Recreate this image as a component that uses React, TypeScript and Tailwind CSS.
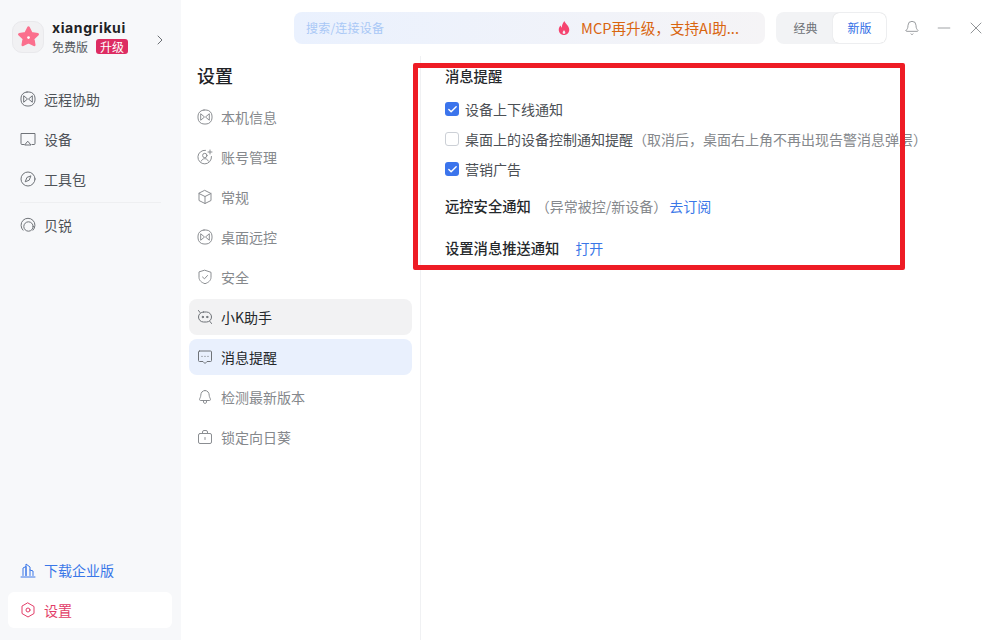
import React from "react";
import { Bell, ChevronRight, Check, Minus, X } from "lucide-react";

const FONT = "[font-family:'Noto_Sans_CJK_SC','Noto_Sans',sans-serif]";

type IconProps = { className?: string };

function Svg({ className, children }: IconProps & { children: React.ReactNode }) {
  return (
    <svg viewBox="0 0 16 16" fill="none" stroke="currentColor" strokeWidth="1" strokeLinecap="round" strokeLinejoin="round" className={className ?? "w-4 h-4"}>
      {children}
    </svg>
  );
}

const Remote = ({ className }: IconProps) => (
  <Svg className={className}>
    <rect x="1" y="1" width="14" height="14" rx="6" />
    <path d="M4 5 7.500 8 4 11zM12 5 8.500 8l3.500 3z" />
  </Svg>
);
const Monitor = ({ className }: IconProps) => (
  <Svg className={className}>
    <path d="M4 13.500H2a1 1 0 0 1-1-1V2.500h14v10a1 1 0 0 1-1 1h-2" />
    <path d="M8 10.500l3 3.500H5z" />
  </Svg>
);
const Compass = ({ className }: IconProps) => (
  <Svg className={className}>
    <circle cx="8" cy="8" r="7" />
    <path d="M10.800 5.200 9.200 9.200 5.200 10.800 6.800 6.800z" />
  </Svg>
);
const Ring = ({ className }: IconProps) => (
  <Svg className={className}>
    <path d="M3 13.200A7 7 0 1 1 13 13.200" />
    <circle cx="8.500" cy="9.500" r="4.700" />
  </Svg>
);
const UserPlus = ({ className }: IconProps) => (
  <Svg className={className}>
    <path d="M14.500 7.500A6.800 6.800 0 1 1 8.500 1.300" />
    <circle cx="7.800" cy="6.500" r="2.200" />
    <path d="M4.300 12c.7-1.600 2-2.300 3.500-2.300s2.800.7 3.500 2.300M13 1v4M11 3h4" />
  </Svg>
);
const Box = ({ className }: IconProps) => (
  <Svg className={className}>
    <path d="M8 1.500 14 4.500v7L8 14.500 2 11.500v-7zM2 4.500 8 7.500l6-3M8 7.500v7" />
  </Svg>
);
const Shield = ({ className }: IconProps) => (
  <Svg className={className}>
    <path d="M8 1.300 14 3.300v5c0 3.200-2.600 5.300-6 6.400-3.400-1.100-6-3.200-6-6.400v-5z" />
    <path d="m5.500 8 2 1.800 3-3.300" />
  </Svg>
);
const Bot = ({ className }: IconProps) => (
  <Svg className={className}>
    <rect x="1.500" y="3" width="13" height="10" rx="5" />
    <path d="M1.500 1.500 3 3.500M14.500 14.500 13 12.500" />
    <circle cx="5.800" cy="8" r=".7" fill="currentColor" />
    <circle cx="10.200" cy="8" r=".7" fill="currentColor" />
  </Svg>
);
const Message = ({ className }: IconProps) => (
  <Svg className={className}>
    <path d="M2.500 2h11a1 1 0 0 1 1 1v8.500a1 1 0 0 1-1 1h-3.500L8 14.500l-2-2H2.500a1 1 0 0 1-1-1V3a1 1 0 0 1 1-1z" />
    <path d="M5 7.300h.01M8 7.300h.01M11 7.300h.01" strokeWidth="1.200" />
  </Svg>
);
const Update = ({ className }: IconProps) => (
  <Svg className={className}>
    <path d="M8 1.500c2.600 0 4.200 2.200 4.200 4.700 0 2 1.300 3.300 1.300 4.300 0 .7-.5 1-1.200 1H3.700c-.7 0-1.200-.3-1.200-1 0-1 1.300-2.300 1.300-4.300C3.800 3.700 5.400 1.500 8 1.500zM6.500 11.500v2c0 1 3 1 3 0v-2" />
  </Svg>
);
const Lock = ({ className }: IconProps) => (
  <Svg className={className}>
    <rect x="1.500" y="4.500" width="13" height="10" rx="1.500" />
    <path d="M5.500 4.500V3a1.500 1.500 0 0 1 1.500-1.500h2A1.500 1.500 0 0 1 10.500 3v1.500M8 8.500v2" />
  </Svg>
);
const Building = ({ className }: IconProps) => (
  <Svg className={className}>
    <path d="M3 13.500V6l3-1.500v9M6 13.500V2l4 3v8.500M10 8l3 1v4.500M1 15h14" />
  </Svg>
);
const Hexagon = ({ className }: IconProps) => (
  <Svg className={className}>
    <path d="M8 1 14 4.500v7L8 15 2 11.500v-7z" />
    <circle cx="8" cy="8" r="2" />
  </Svg>
);

function NavItem({ icon, label }: { icon: React.ReactNode; label: string }) {
  return (
    <div className="h-10 flex items-center gap-2 pl-5 text-sm text-[#4e5358]">
      <span className="text-[#6f7378]">{icon}</span>
      {label}
    </div>
  );
}

function SettingRow({ icon, label, state }: { icon: React.ReactNode; label: string; state?: "hover" | "active" }) {
  return (
    <div
      className={
        "h-9 rounded-lg flex items-center gap-2 px-2 text-sm " +
        (state === "hover" ? "bg-[#f2f2f3] text-[#25282b]" : state === "active" ? "bg-[#e9f0fd] text-[#25282b]" : "text-[#85888c]")
      }
    >
      <span className={state ? "text-[#6f7378]" : "text-[#8b8e92]"}>{icon}</span>
      {label}
    </div>
  );
}

function CheckRow({ checked, children }: { checked?: boolean; children: React.ReactNode }) {
  return (
    <div className="h-[30px] flex items-center gap-[6px] text-sm text-[#4c5055] whitespace-nowrap">
      {checked ? (
        <span className="w-[14px] h-[14px] rounded-[3px] bg-[#3b74ec] flex items-center justify-center">
          <Check className="w-[11px] h-[11px] text-white" strokeWidth={3} />
        </span>
      ) : (
        <span className="w-[14px] h-[14px] rounded-[3px] border border-[#ccd0d6] bg-white" />
      )}
      {children}
    </div>
  );
}

export default function App() {
  return (
    <div className={"relative w-[1000px] h-[640px] overflow-hidden bg-white flex " + FONT}>
      <aside className="w-[181px] h-full bg-[#f7f8fa] flex flex-col">
        <div className="h-[79px] flex items-center pl-3 pr-[13px]">
          <div className="w-8 h-8 rounded-[10px] bg-[#f1f1f3] border border-[#e9e9ec] flex items-center justify-center shrink-0 mb-[6px]">
            <svg viewBox="0 0 24 24" className="w-[25px] h-[25px]">
              <path d="M12 3.500 14.800 9l6 .9-4.300 4.200 1 6L12 17.300 6.500 20.100l1-6L3.200 9.900l6-.9z" fill="#fb6f8d" stroke="#fb6f8d" strokeWidth="2.500" strokeLinejoin="round" />
              <circle cx="12" cy="13" r="1.300" fill="#fff" />
            </svg>
          </div>
          <div className="ml-2 flex-1 mb-[6px]">
            <div className="text-sm font-bold tracking-[0.6px] leading-[20px] text-[#1f2225] [font-family:Inter,'Noto_Sans_CJK_SC',sans-serif]">xiangrikui</div>
            <div className="flex items-center gap-2 text-xs leading-[18px] text-[#54585d]">
              免费版
              <span className="px-1 h-[15px] leading-[15px] rounded-[3px] bg-[#dd2c62] text-white text-xs">升级</span>
            </div>
          </div>
          <ChevronRight className="w-4 h-4 text-[#6b6f74] shrink-0" strokeWidth={1.500} />
        </div>
        <div>
          <NavItem icon={<Remote />} label="远程协助" />
          <NavItem icon={<Monitor />} label="设备" />
          <NavItem icon={<Compass />} label="工具包" />
          <div className="mx-5 mt-[3px] mb-[2px] h-px bg-[#eeeff1]" />
          <NavItem icon={<Ring />} label="贝锐" />
        </div>
        <div className="mt-auto pb-3">
          <div className="h-9 mb-1 pb-px flex items-center gap-2 pl-5 text-sm text-[#3a77e8]">
            <Building />
            下载企业版
          </div>
          <div className="ml-2 mr-[9px] h-9 pb-px rounded-md bg-white flex items-center gap-2 pl-3 text-sm text-[#e23d68]">
            <Hexagon />
            设置
          </div>
        </div>
      </aside>

      <div className="flex-1 flex flex-col min-w-0">
        <header className="h-[56px] shrink-0 flex items-center pl-[113px]">
          <div className="w-[471px] h-8 rounded-lg bg-gradient-to-r from-[#eaf1fe] to-[#f5f4f6] flex items-center pl-3 pr-[26px] text-xs tracking-[0.2px] text-[#a9c8f6]">
            <span>搜索/连接设备</span>
            <span className="ml-auto flex items-center gap-[10px] text-[14.6px] tracking-normal text-[#d9650f]">
              <svg viewBox="0 0 16 16" className="w-[14px] h-4">
                <path d="M8.500 0c.5 2.800 5.500 5 5.500 10 0 3.500-2.700 6-6 6s-6-2.500-6-6c0-2.200 1-3.800 2.200-5 .1 1.200.5 2 1.300 2.600C5.300 5 6.800 2 8.500 0zM8 10.500c-.8 1-1.500 1.700-1.500 2.800 0 .9.700 1.400 1.500 1.400s1.500-.5 1.500-1.400c0-1.100-.7-1.800-1.500-2.800z" fill="#f5446f" fillRule="evenodd" />
              </svg>
              MCP再升级，支持AI助...
            </span>
          </div>
          <div className="ml-[11px] w-[111px] h-8 rounded-lg bg-[#f2f3f5] flex items-center text-xs text-[#6d7176] p-px">
            <span className="flex-1 text-center pl-px">经典</span>
            <span className="w-[53px] h-[30px] rounded-md bg-white shadow-[0_0_1px_rgba(0,0,0,0.2)] text-[#2f6de6] flex items-center justify-center">新版</span>
          </div>
          <Bell className="ml-[17px] w-4 h-4 text-[#8a8d91]" strokeWidth={1.300} />
          <Minus className="ml-[14px] w-5 h-5 text-[#a0a3a6]" strokeWidth={1.200} />
          <X className="ml-3 w-5 h-5 text-[#7b7e82]" strokeWidth={1} />
        </header>

        <div className="flex-1 flex min-h-0">
          <nav className="w-[240px] h-full border-r border-[#f0f1f3] px-2">
            <h1 className="pl-2 h-[38px] mb-[5px] flex items-center text-lg font-medium text-[#1f2225]">设置</h1>
            <div className="flex flex-col gap-1">
              <SettingRow icon={<Remote />} label="本机信息" />
              <SettingRow icon={<UserPlus />} label="账号管理" />
              <SettingRow icon={<Box />} label="常规" />
              <SettingRow icon={<Remote />} label="桌面远控" />
              <SettingRow icon={<Shield />} label="安全" />
              <SettingRow icon={<Bot />} label="小K助手" state="hover" />
              <SettingRow icon={<Message />} label="消息提醒" state="active" />
              <SettingRow icon={<Update />} label="检测最新版本" />
              <SettingRow icon={<Lock />} label="锁定向日葵" />
            </div>
          </nav>

          <main className="flex-1 pl-6 pt-[10px] text-sm text-[#25282b]">
            <h2 className="h-5 leading-5 font-medium mb-2 text-[14.300px]">消息提醒</h2>
            <CheckRow checked>设备上下线通知</CheckRow>
            <CheckRow>
              <span>
                桌面上的设备控制通知提醒<span className="text-[#85888c]">（取消后，桌面右上角不再出现告警消息弹层）</span>
              </span>
            </CheckRow>
            <CheckRow checked>营销广告</CheckRow>
            <div className="mt-3 h-5 flex items-center">
              <span className="font-medium text-[14.300px]">远控安全通知</span>
              <span className="ml-[5px] text-[#85888c]">（异常被控/新设备）</span>
              <span className="ml-[2px] text-[#3a77e8]">去订阅</span>
            </div>
            <div className="mt-[22px] h-5 flex items-center">
              <span className="font-medium text-[14.300px]">设置消息推送通知</span>
              <span className="ml-4 text-[#3a77e8]">打开</span>
            </div>
          </main>
        </div>
      </div>

      <div className="absolute left-[413px] top-[63px] w-[492px] h-[207px] border-[5px] border-[#ee1c25] rounded-[2px] pointer-events-none" />
    </div>
  );
}
